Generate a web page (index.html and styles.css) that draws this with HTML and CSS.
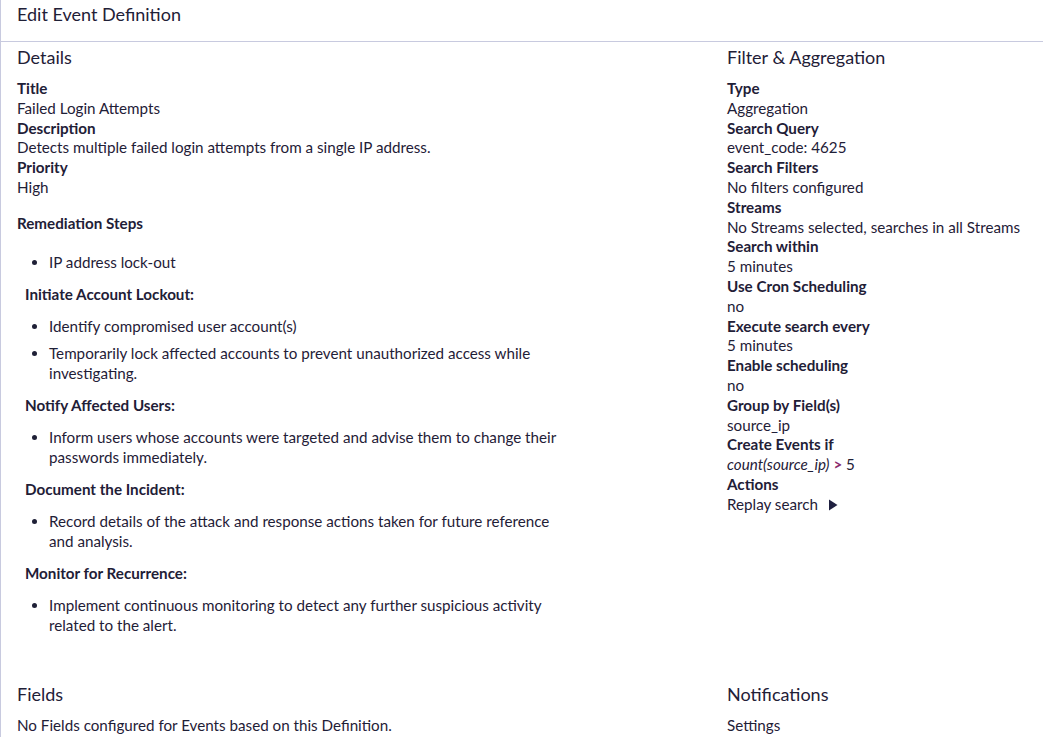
FILE: index.html
```html
<!DOCTYPE html>
<html lang="en">
<head>
<meta charset="utf-8">
<title>Edit Event Definition</title>
<link rel="stylesheet" href="styles.css">
</head>
<body>
<div class="page">
  <header class="page-header">Edit Event Definition</header>
  <div class="summary">
    <section class="col col-main">
      <h2 class="section-title">Details</h2>
      <dl class="props">
        <dt>Title</dt>
        <dd>Failed Login Attempts</dd>
        <dt>Description</dt>
        <dd>Detects multiple failed login attempts from a single IP address.</dd>
        <dt>Priority</dt>
        <dd>High</dd>
      </dl>
      <div class="markdown">
        <h5 class="md-title">Remediation Steps</h5>
        <ul>
          <li>IP address lock-out</li>
        </ul>
        <h6 class="md-sub">Initiate Account Lockout:</h6>
        <ul>
          <li>Identify compromised user account(s)</li>
          <li>Temporarily lock affected accounts to prevent unauthorized access while investigating.</li>
        </ul>
        <h6 class="md-sub">Notify Affected Users:</h6>
        <ul>
          <li>Inform users whose accounts were targeted and advise them to change their passwords immediately.</li>
        </ul>
        <h6 class="md-sub">Document the Incident:</h6>
        <ul>
          <li>Record details of the attack and response actions taken for future reference and analysis.</li>
        </ul>
        <h6 class="md-sub">Monitor for Recurrence:</h6>
        <ul>
          <li>Implement continuous monitoring to detect any further suspicious activity related to the alert.</li>
        </ul>
      </div>
    </section>
    <section class="col col-side">
      <h2 class="section-title">Filter &amp; Aggregation</h2>
      <dl class="props">
        <dt>Type</dt>
        <dd>Aggregation</dd>
        <dt>Search Query</dt>
        <dd>event_code: 4625</dd>
        <dt>Search Filters</dt>
        <dd>No filters configured</dd>
        <dt>Streams</dt>
        <dd>No Streams selected, searches in all Streams</dd>
        <dt>Search within</dt>
        <dd>5 minutes</dd>
        <dt>Use Cron Scheduling</dt>
        <dd>no</dd>
        <dt>Execute search every</dt>
        <dd>5 minutes</dd>
        <dt>Enable scheduling</dt>
        <dd>no</dd>
        <dt>Group by Field(s)</dt>
        <dd>source_ip</dd>
        <dt>Create Events if</dt>
        <dd><em>count(source_ip)</em> <span class="op">&gt;</span> 5</dd>
        <dt>Actions</dt>
        <dd class="action">Replay search
          <svg class="caret" width="10" height="12" viewBox="0 0 10 12" aria-hidden="true"><path d="M1 0.5 L9.5 6 L1 11.5 Z" fill="#1f2040"/></svg>
        </dd>
      </dl>
    </section>
  </div>
  <div class="summary summary-bottom">
    <section class="col col-main">
      <h2 class="section-title">Fields</h2>
      <p class="text">No Fields configured for Events based on this Definition.</p>
    </section>
    <section class="col col-side">
      <h2 class="section-title">Notifications</h2>
      <p class="text">Settings</p>
    </section>
  </div>
</div>
</body>
</html>
```

FILE: styles.css
```css
html, body {
  margin: 0;
  padding: 0;
  background: #ffffff;
}

body {
  font-family: Lato, "Open Sans", "Liberation Sans", sans-serif;
  font-size: 15.2px;
  color: #1f2037;
}

.page {
  border-left: 1px solid #c8cadf;
  min-height: 737px;
  box-sizing: border-box;
}

.page-header {
  height: 42px;
  box-sizing: border-box;
  padding: 3px 16px 0;
  font-size: 18px;
  line-height: 22px;
  border-bottom: 1px solid #c8cadf;
}

.summary {
  display: grid;
  grid-template-columns: 710px 1fr;
}

.col {
  padding: 0 16px;
}

.section-title {
  margin: 3px 0 10px;
  font-size: 18px;
  font-weight: 400;
  line-height: 24px;
}

.props {
  margin: 0;
  line-height: 19.8px;
}

.props dt {
  font-weight: 700;
}

.props dd {
  margin: 0;
}

.op {
  color: #8a2a6d;
  font-weight: 700;
}

.action {
  display: flex;
  align-items: center;
  gap: 10px;
}

.markdown {
  max-width: 550px;
  line-height: 20px;
}

.md-title {
  margin: 15px 0 19px;
  font-size: 15.2px;
  font-weight: 700;
}

.md-sub {
  margin: 0 0 12px 8px;
  font-size: 15.2px;
  font-weight: 700;
}

.markdown ul {
  margin: 0 0 12px;
  padding-left: 32px;
}

.markdown li + li {
  margin-top: 7px;
}

.summary-bottom {
  margin-top: 35px;
}

.summary-bottom .section-title {
  margin: 0 0 10px;
}

.text {
  margin: 0;
  line-height: 19.8px;
}
```
